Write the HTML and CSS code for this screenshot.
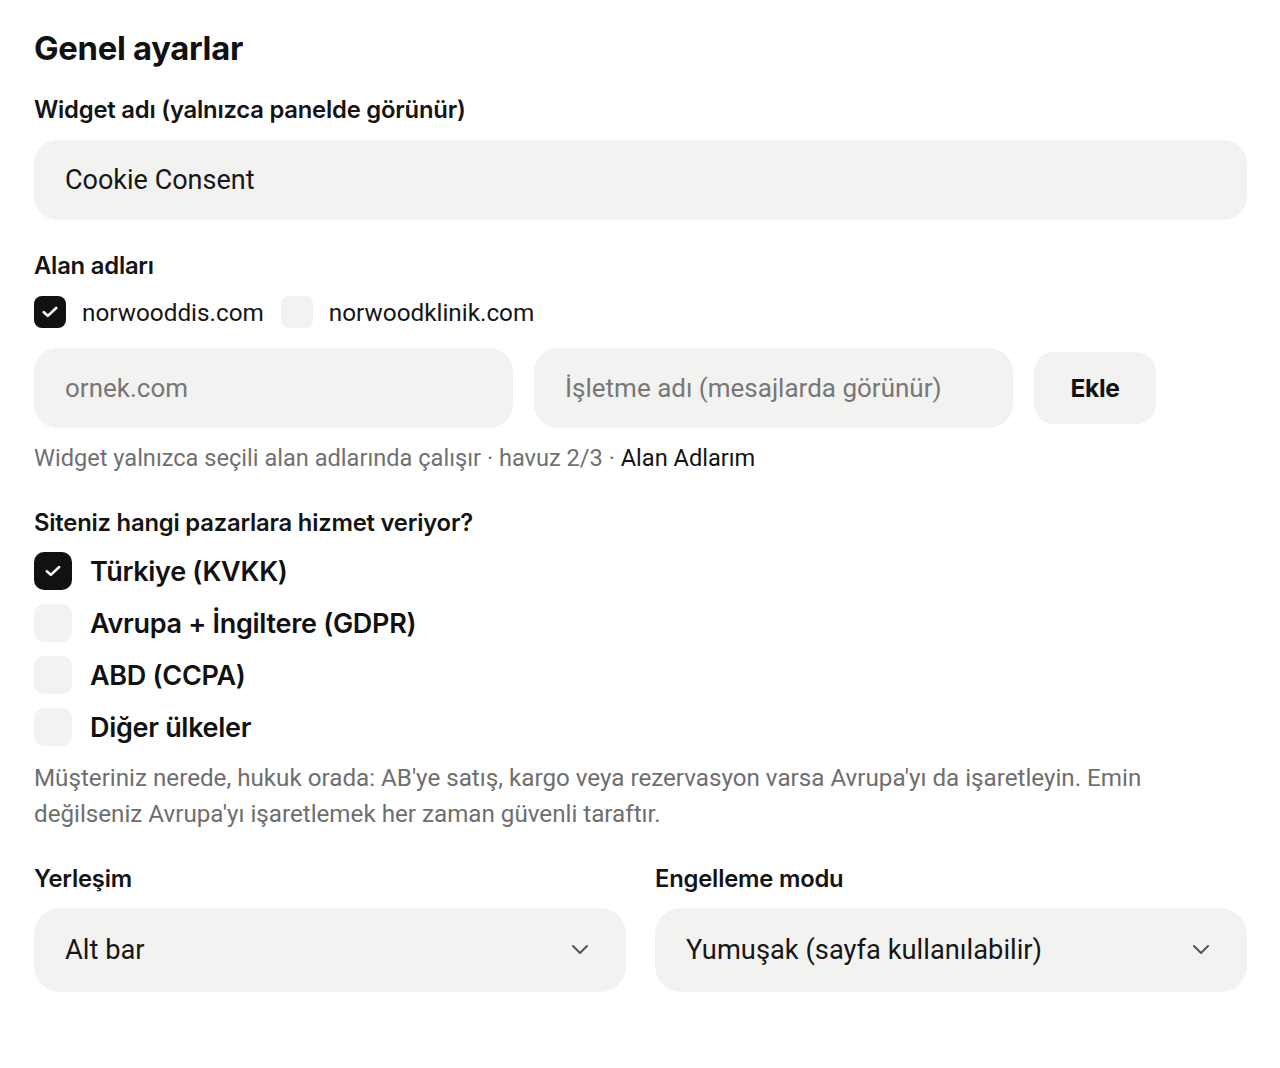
FILE: index.html
```html
<!DOCTYPE html>
<html lang="tr">
<head>
<meta charset="utf-8">
<title>Genel ayarlar</title>
<link rel="stylesheet" href="styles.css">
</head>
<body>
<main class="page">
  <h1 class="title">Genel ayarlar</h1>

  <label class="label label-first">Widget adı (yalnızca panelde görünür)</label>
  <div class="field field-full"><span class="value">Cookie Consent</span></div>

  <div class="label label-section">Alan adları</div>
  <div class="domains">
    <span class="check check-sm is-on">
      <svg class="tick" viewBox="0 0 14 10"><path d="M1.6 5.2l3.5 3.2 7.3-6.9" fill="none" stroke="#fff" stroke-width="2.3" stroke-linecap="round" stroke-linejoin="round"/></svg>
    </span>
    <span class="domain">norwooddis.com</span>
    <span class="check check-sm"></span>
    <span class="domain">norwoodklinik.com</span>
  </div>

  <div class="add-row">
    <div class="field"><span class="placeholder">ornek.com</span></div>
    <div class="field"><span class="placeholder">İşletme adı (mesajlarda görünür)</span></div>
    <button class="btn">Ekle</button>
  </div>

  <p class="hint">Widget yalnızca seçili alan adlarında çalışır · havuz 2/3 · <span class="hint-link">Alan Adlarım</span></p>

  <div class="label label-markets">Siteniz hangi pazarlara hizmet veriyor?</div>
  <ul class="markets">
    <li class="market">
      <span class="check is-on">
        <svg class="tick" viewBox="0 0 14 10"><path d="M1.6 5.2l3.5 3.2 7.3-6.9" fill="none" stroke="#fff" stroke-width="2.2" stroke-linecap="round" stroke-linejoin="round"/></svg>
      </span>
      <span class="market-name">Türkiye (KVKK)</span>
    </li>
    <li class="market"><span class="check"></span><span class="market-name">Avrupa + İngiltere (GDPR)</span></li>
    <li class="market"><span class="check"></span><span class="market-name">ABD (CCPA)</span></li>
    <li class="market"><span class="check"></span><span class="market-name">Diğer ülkeler</span></li>
  </ul>

  <p class="note">Müşteriniz nerede, hukuk orada: AB'ye satış, kargo veya rezervasyon varsa Avrupa'yı da işaretleyin. Emin değilseniz Avrupa'yı işaretlemek her zaman güvenli taraftır.</p>

  <div class="selects">
    <div class="select-group">
      <div class="label">Yerleşim</div>
      <div class="select">
        <span class="value">Alt bar</span>
        <svg class="chev" viewBox="0 0 20 12" width="20" height="12"><path d="M3 2l7 7 7-7" fill="none" stroke="#555" stroke-width="2" stroke-linecap="round" stroke-linejoin="round"/></svg>
      </div>
    </div>
    <div class="select-group">
      <div class="label">Engelleme modu</div>
      <div class="select">
        <span class="value">Yumuşak (sayfa kullanılabilir)</span>
        <svg class="chev" viewBox="0 0 20 12" width="20" height="12"><path d="M3 2l7 7 7-7" fill="none" stroke="#555" stroke-width="2" stroke-linecap="round" stroke-linejoin="round"/></svg>
      </div>
    </div>
  </div>
</main>
</body>
</html>
```

FILE: styles.css
```css
* { box-sizing: border-box; }

html, body {
  margin: 0;
  padding: 0;
  background: #ffffff;
  color: #141414;
  font-family: Roboto, "Liberation Sans", sans-serif;
}

.page {
  padding: 30px 33px 40px 34px;
  display: flex;
  flex-direction: column;
}

.title {
  margin: 0;
  font-family: Inter, "Liberation Sans", sans-serif;
  font-weight: 700;
  font-size: 32.8px;
  line-height: 36px;
  letter-spacing: -0.3px;
  color: #111;
}

.label {
  display: block;
  font-family: Inter, "Liberation Sans", sans-serif;
  font-weight: 600;
  font-size: 23.8px;
  line-height: 28px;
  letter-spacing: -0.2px;
  color: #141414;
}

.label-first { margin-top: 30px; }
.label-section { margin-top: 32px; }
.label-markets { margin-top: 37px; }

.field {
  height: 80px;
  border-radius: 24px;
  background: #f2f2f0;
  display: flex;
  align-items: center;
  padding: 0 31px;
  font-size: 26px;
}

.field-full { margin-top: 16px; font-size: 27px; }

.value { color: #161616; }
.placeholder { color: #777; }

.domains {
  margin-top: 16px;
  height: 32px;
  display: flex;
  align-items: center;
}

.check {
  width: 38px;
  height: 38px;
  border-radius: 10px;
  background: #f2f2f0;
  display: inline-flex;
  align-items: center;
  justify-content: center;
  flex: none;
}

.check.is-on { background: #111; }

.check-sm {
  width: 32px;
  height: 32px;
  border-radius: 8px;
}

.tick {
  display: block;
  width: 16px;
  height: 12px;
}

.domain {
  font-size: 24.3px;
  color: #161616;
  margin-left: 16px;
  margin-right: 17px;
}

.add-row {
  margin-top: 20px;
  display: grid;
  grid-template-columns: 479px 479px auto;
  gap: 21px;
  align-items: center;
}

.btn {
  justify-self: start;
  width: 122px;
  height: 72px;
  border: none;
  border-radius: 20px;
  background: #f2f2f0;
  font-family: Inter, "Liberation Sans", sans-serif;
  font-weight: 700;
  font-size: 24.5px;
  color: #111;
  letter-spacing: -0.3px;
}

.hint {
  margin: 16px 0 0;
  font-size: 23.6px;
  line-height: 28px;
  color: #707070;
}

.hint-link { color: #141414; }

.markets {
  list-style: none;
  margin: 15px 0 0;
  padding: 0;
  display: flex;
  flex-direction: column;
  gap: 14px;
}

.market {
  display: flex;
  align-items: center;
  height: 38px;
}

.market-name {
  margin-left: 18px;
  font-family: Inter, "Liberation Sans", sans-serif;
  font-weight: 600;
  font-size: 27px;
  letter-spacing: -0.3px;
  color: #111;
}

.note {
  margin: 14px 0 0;
  font-size: 24.2px;
  line-height: 36px;
  color: #6e6e6e;
}

.selects {
  margin-top: 33px;
  display: grid;
  grid-template-columns: 1fr 1fr;
  gap: 29px;
}

.select {
  margin-top: 15px;
  height: 84px;
  border-radius: 26px;
  background: #f2f2f0;
  display: flex;
  align-items: center;
  justify-content: space-between;
  padding: 0 36px 0 31px;
  font-size: 27.3px;
}

.chev { flex: none; }
```
